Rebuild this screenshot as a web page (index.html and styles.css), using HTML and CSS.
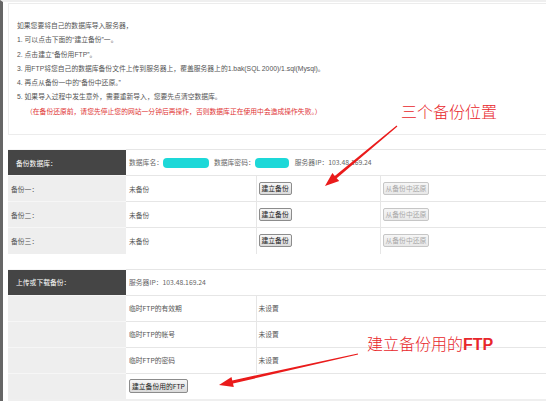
FILE: index.html
```html
<!DOCTYPE html>
<html lang="zh-CN">
<head>
    <meta charset="UTF-8">
    <title>数据库导入</title>
    <link rel="stylesheet" href="styles.css">
</head>
<body>
    <div class="page">
        <div class="notice">
            <p>如果您要将自己的数据库导入服务器，</p>
            <p>1. 可以点击下面的“建立备份”一。</p>
            <p>2. 点击建立“备份用FTP”。</p>
            <p>3. 用FTP将您自己的数据库备份文件上传到服务器上，覆盖服务器上的1.bak(SQL 2000)/1.sql(Mysql)。</p>
            <p>4. 再点从备份一中的“备份中还原。”</p>
            <p>5. 如果导入过程中发生意外，需要重新导入，您要先点清空数据库。</p>
            <p class="warn">（在备份还原前，请您先停止您的网站一分钟后再操作，否则数据库正在使用中会造成操作失败。）</p>
        </div>

        <table class="grid backup">
            <colgroup>
                <col class="c1"><col class="c2"><col class="c3"><col>
            </colgroup>
            <tr class="head">
                <td class="label">备份数据库：</td>
                <td colspan="3">数据库名：<span class="mask"></span><span class="gap">数据库密码：</span><span class="mask short"></span><span class="gap2">服务器IP：103.48.169.24</span></td>
            </tr>
            <tr>
                <td class="label">备份一：</td>
                <td>未备份</td>
                <td class="act"><button class="btn">建立备份</button></td>
                <td class="act"><button class="btn" disabled>从备份中还原</button></td>
            </tr>
            <tr>
                <td class="label">备份二：</td>
                <td>未备份</td>
                <td class="act"><button class="btn">建立备份</button></td>
                <td class="act"><button class="btn" disabled>从备份中还原</button></td>
            </tr>
            <tr>
                <td class="label">备份三：</td>
                <td>未备份</td>
                <td class="act"><button class="btn">建立备份</button></td>
                <td class="act"><button class="btn" disabled>从备份中还原</button></td>
            </tr>
        </table>

        <table class="grid ftp">
            <colgroup>
                <col class="c1"><col class="c2"><col>
            </colgroup>
            <tr class="head">
                <td class="label">上传或下载备份：</td>
                <td colspan="2">服务器IP：103.48.169.24</td>
            </tr>
            <tr>
                <td class="label"></td>
                <td>临时FTP的有效期</td>
                <td class="act">未设置</td>
            </tr>
            <tr>
                <td class="label"></td>
                <td>临时FTP的帐号</td>
                <td class="act">未设置</td>
            </tr>
            <tr>
                <td class="label"></td>
                <td>临时FTP的密码</td>
                <td class="act">未设置</td>
            </tr>
            <tr>
                <td class="label"></td>
                <td colspan="2"><button class="btn big">建立备份用的FTP</button></td>
            </tr>
        </table>
        <div class="foot"></div>

        <!-- 标注 -->
        <div class="annot annot-1">三个备份位置</div>
        <div class="annot annot-2">建立备份用的<b>FTP</b></div>
        <svg class="arrows" width="546" height="401" viewBox="0 0 546 401">
            <polygon points="397.4,126.4 336.7,178.2 339.2,181.1 325,186 332.4,173.0 334.8,175.9 396.6,125.6" fill="#ea1b1b"/>
            <polygon points="358.1,354.4 233.0,383.5 233.8,387.0 219,385 231.5,376.9 232.3,380.4 357.9,353.6" fill="#ea1b1b"/>
        </svg>
    </div>
</body>
</html>
```

FILE: styles.css
```css
body {
    margin: 0;
    font-family: "Noto Sans CJK SC", "Liberation Sans", sans-serif;
    background-color: #fff;
    border-left: 3px solid #666;
    border-top: 2px solid #efefef;
    min-height: 399px;
}
.page {
    position: relative;
    padding: 1px 0 0 5px;
}
.notice {
    height: 132px;
    box-sizing: border-box;
    border: 1px solid #ececec;
    border-right: none;
    padding: 15px 0 0 8px;
}
.notice p {
    margin: 0;
    font-family: "Liberation Sans", "Noto Sans CJK SC", sans-serif;
    font-size: 6.8px;
    line-height: 14.3px;
    color: #555;
    white-space: nowrap;
}
.notice .warn {
    color: #e03333;
    padding-left: 9px;
}
.grid {
    width: 100%;
    border-collapse: collapse;
    table-layout: fixed;
    margin-top: 14px;
}
.grid.ftp {
    margin-top: 15px;
}
.grid .c1 {
    width: 118px;
}
.grid .c2 {
    width: 130px;
}
.grid .c3 {
    width: 124px;
}
.grid tr {
    height: 26px;
}
.grid td {
    padding: 0 3px;
    font-size: 6.8px;
    color: #555;
    border-top: 1px solid #e6e6e6;
    border-left: 1px solid #e6e6e6;
    white-space: nowrap;
    vertical-align: middle;
}
.grid td.act {
    padding-left: 2px;
}
.grid td.label {
    background-color: #eeeeee;
    border-left: none;
    border-top-color: #f6f6f6;
}
.grid td.label + td {
    border-left: none;
}
.grid .head td.label {
    background-color: #454545;
    color: #fff;
    padding-left: 8px;
}
.grid .head td {
    color: #666;
}
.mask {
    display: inline-block;
    width: 46px;
    height: 10px;
    background-color: #1dd8d8;
    border-radius: 4px;
    vertical-align: middle;
}
.mask.short {
    width: 34px;
}
.gap {
    margin-left: 5px;
}
.gap2 {
    margin-left: 6px;
}
.btn {
    font-family: "Noto Sans CJK SC", "Liberation Sans", sans-serif;
    font-size: 6.8px;
    line-height: 9px;
    padding: 1px 2px;
    margin: 0;
    color: #222;
    border: 1px solid #8c8c8c;
    border-radius: 2px;
    background: linear-gradient(#f8f8f8, #dadada);
}
.btn:disabled {
    color: #a8a8a8;
    border-color: #c6c6c6;
    background: linear-gradient(#f6f6f6, #e8e8e8);
}
.btn.big {
    line-height: 10px;
    padding: 1px 2px;
}
.foot {
    height: 4px;
    background-color: #efefef;
}
.annot {
    position: absolute;
    font-size: 16px;
    line-height: 16px;
    color: #e8262b;
    white-space: nowrap;
    font-weight: 300;
}
.annot b {
    font-family: "Liberation Sans", sans-serif;
    font-weight: bold;
}
.annot-1 {
    left: 398px;
    top: 101px;
}
.annot-2 {
    left: 364px;
    top: 333px;
}
.arrows {
    position: absolute;
    left: -3px;
    top: -2px;
    pointer-events: none;
}
```
